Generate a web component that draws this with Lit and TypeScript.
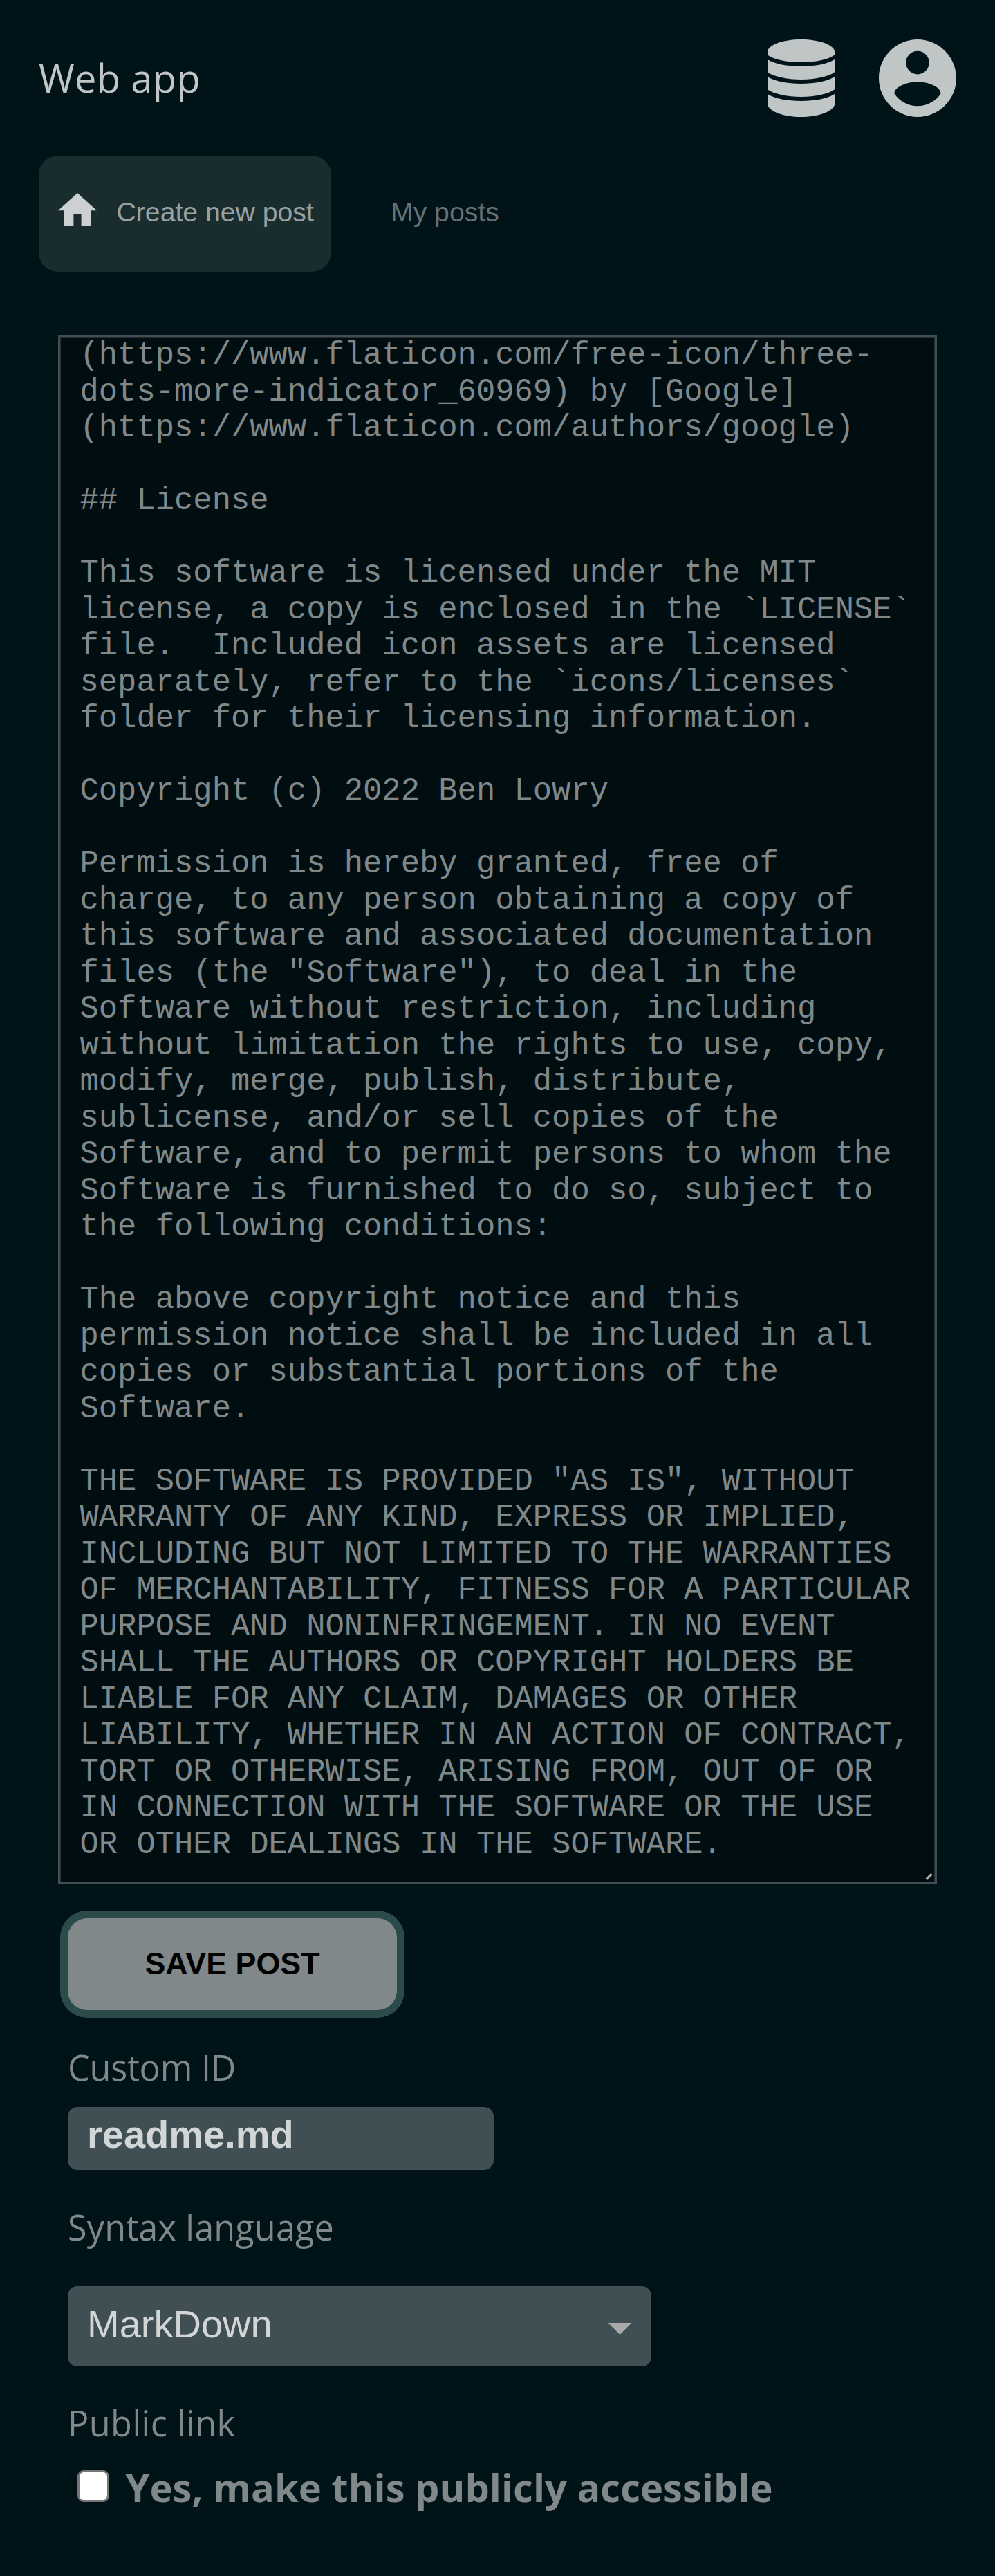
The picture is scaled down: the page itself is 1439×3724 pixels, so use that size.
import { LitElement, html, css } from "lit";
import { customElement } from "lit/decorators.js";

const POST_TEXT = `(https://www.flaticon.com/free-icon/three-
dots-more-indicator_60969) by [Google]
(https://www.flaticon.com/authors/google)

## License

This software is licensed under the MIT
license, a copy is enclosed in the \`LICENSE\`
file.  Included icon assets are licensed
separately, refer to the \`icons/licenses\`
folder for their licensing information.

Copyright (c) 2022 Ben Lowry

Permission is hereby granted, free of
charge, to any person obtaining a copy of
this software and associated documentation
files (the "Software"), to deal in the
Software without restriction, including
without limitation the rights to use, copy,
modify, merge, publish, distribute,
sublicense, and/or sell copies of the
Software, and to permit persons to whom the
Software is furnished to do so, subject to
the following conditions:

The above copyright notice and this
permission notice shall be included in all
copies or substantial portions of the
Software.

THE SOFTWARE IS PROVIDED "AS IS", WITHOUT
WARRANTY OF ANY KIND, EXPRESS OR IMPLIED,
INCLUDING BUT NOT LIMITED TO THE WARRANTIES
OF MERCHANTABILITY, FITNESS FOR A PARTICULAR
PURPOSE AND NONINFRINGEMENT. IN NO EVENT
SHALL THE AUTHORS OR COPYRIGHT HOLDERS BE
LIABLE FOR ANY CLAIM, DAMAGES OR OTHER
LIABILITY, WHETHER IN AN ACTION OF CONTRACT,
TORT OR OTHERWISE, ARISING FROM, OUT OF OR
IN CONNECTION WITH THE SOFTWARE OR THE USE
OR OTHER DEALINGS IN THE SOFTWARE.`;

@customElement("app-header")
export class AppHeader extends LitElement {
  static styles = css`
    :host {
      display: flex;
      align-items: center;
      justify-content: space-between;
      box-sizing: border-box;
      height: 225px;
      padding: 0 56px;
      color: #c0c6c6;
      font: 56px/76px "Open Sans", sans-serif;
    }
    .title {
      margin-bottom: 1px;
      letter-spacing: 0.35px;
    }
    .icons {
      display: flex;
      gap: 64px;
    }
    svg {
      display: block;
      height: 112px;
      fill: currentColor;
    }
  `;

  render() {
    return html`
      <div class="title">Web app</div>
      <div class="icons">
        <svg width="97" viewBox="0 0 97 112">
          <path d="M0 18C0 8 22 0 48.500 0S97 8 97 18V22.500C88 29 69 33 48.500 33S9 29 0 22.500Z" />
          <path d="M0 29C10 35.500 29 39 48.500 39S87 35.500 97 29V47.300C88 54 69 58 48.500 58S9 54 0 47.300Z" />
          <path d="M0 54C10 60.500 29 64 48.500 64S87 60.500 97 54V72.300C88 79 69 83 48.500 83S9 79 0 72.300Z" />
          <path d="M0 79C10 85.500 29 89 48.500 89S87 85.500 97 79V94.700C93 105 73 112 48.500 112S4 105 0 94.700Z" />
        </svg>
        <svg width="112" viewBox="2 2 20 20">
          <path
            d="M12 2C6.480 2 2 6.480 2 12s4.480 10 10 10 10-4.480 10-10S17.520 2 12 2zm0 3c1.660 0 3 1.340 3 3s-1.340 3-3 3-3-1.340-3-3 1.340-3 3-3zm0 14.200c-2.500 0-4.710-1.280-6-3.220.03-1.990 4-3.080 6-3.080 1.990 0 5.970 1.090 6 3.080-1.290 1.940-3.500 3.220-6 3.220z"
          />
        </svg>
      </div>
    `;
  }
}

@customElement("app-tabs")
export class AppTabs extends LitElement {
  static styles = css`
    :host {
      display: flex;
      padding: 0 56px;
      font: 39.2px/44px "Liberation Sans", Arial, sans-serif;
    }
    .tab {
      display: flex;
      box-sizing: border-box;
      height: 168px;
      padding: 59.5px 28px 0;
      border-radius: 28px;
      color: #666f72;
    }
    .tab.active {
      width: 423px;
      margin-right: 58px;
      gap: 28.5px;
      background: #192d2f;
      color: #99a1a2;
      white-space: nowrap;
    }
    svg {
      display: block;
      flex: none;
      width: 56px;
      height: 47.6px;
      margin-top: -6px;
      fill: #cdd0d1;
    }
  `;

  render() {
    return html`
      <div class="tab active">
        <svg viewBox="2 3 20 17"><path d="M10 20v-6h4v6h5v-8h3L12 3 2 12h3v8z" /></svg>
        <span>Create new post</span>
      </div>
      <div class="tab">My posts</div>
    `;
  }
}

@customElement("app-root")
export class AppRoot extends LitElement {
  static styles = css`
    :host {
      display: block;
      box-sizing: border-box;
      height: 3724px;
      overflow: hidden;
      background: #001318;
      color: #80888a;
    }
    .editor {
      position: relative;
      box-sizing: border-box;
      width: 1271px;
      height: 2240px;
      margin: 91px 0 0 84px;
      padding: 1px 28px 0 28.5px;
      border: 3px solid #434c50;
      box-shadow: inset 0 0 0 1px #252e32;
      background: #000e12;
      font: 45.5px/52.5px "Liberation Mono", "Courier New", monospace;
      white-space: pre;
    }
    .grip {
      position: absolute;
      right: 2px;
      bottom: 2px;
      width: 14px;
      height: 14px;
    }
    .form {
      display: flex;
      flex-direction: column;
      align-items: flex-start;
      padding: 49px 98px 0;
    }
    .save {
      width: 476px;
      height: 133px;
      padding: 0 0 3px;
      border: 0;
      border-radius: 28px;
      background: #80888a;
      box-shadow: 0 0 0 11px #2b4a4a;
      color: #000;
      font: bold 44.8px/52px "Liberation Sans", Arial, sans-serif;
    }
    .label {
      font: 50.4px/70px "Open Sans", sans-serif;
    }
    .label.id {
      margin-top: 47.5px;
      letter-spacing: -0.25px;
    }
    .label.lang {
      margin-top: 47.5px;
      letter-spacing: 0.15px;
    }
    .label.link {
      margin-top: 47px;
      letter-spacing: 0.45px;
    }
    .field {
      box-sizing: border-box;
      border-radius: 14px;
      background: #404f54;
      color: #d2d6d6;
      padding: 0 28px;
      font: 56px/64px "Liberation Sans", Arial, sans-serif;
    }
    .text {
      width: 616px;
      height: 91px;
      margin-top: 22.5px;
      padding-top: 8px;
      font-weight: bold;
    }
    .select {
      display: flex;
      justify-content: space-between;
      width: 844px;
      height: 115.5px;
      margin-top: 50.5px;
      padding-top: 22.5px;
    }
    .arrow {
      width: 35px;
      height: 17.5px;
      margin-top: 30px;
      background: #aaa;
      clip-path: polygon(0 0, 100% 0, 50% 100%);
    }
    .check {
      display: flex;
      margin-top: 19.5px;
      padding-left: 14px;
      gap: 24px;
      font: bold 56px/76px "Open Sans", sans-serif;
      letter-spacing: 0.03px;
    }
    .box {
      box-sizing: border-box;
      width: 45.5px;
      height: 45.5px;
      margin-top: 14px;
      border: 3.5px solid #767676;
      border-radius: 9px;
      background: #fff;
    }
  `;

  render() {
    return html`
      <app-header></app-header>
      <app-tabs></app-tabs>
      <div class="editor">${POST_TEXT}<svg class="grip" viewBox="0 0 14 14">
          <path d="M1 13L12 2" stroke="#000" stroke-width="7" />
          <path d="M3.500 12L11.500 4" stroke="#a8acac" stroke-width="3.500" />
        </svg></div>
      <div class="form">
        <button class="save">SAVE POST</button>
        <div class="label id">Custom ID</div>
        <div class="field text">readme.md</div>
        <div class="label lang">Syntax language</div>
        <div class="field select"><span>MarkDown</span><i class="arrow"></i></div>
        <div class="label link">Public link</div>
        <div class="check"><i class="box"></i><span>Yes, make this publicly accessible</span></div>
      </div>
    `;
  }
}
